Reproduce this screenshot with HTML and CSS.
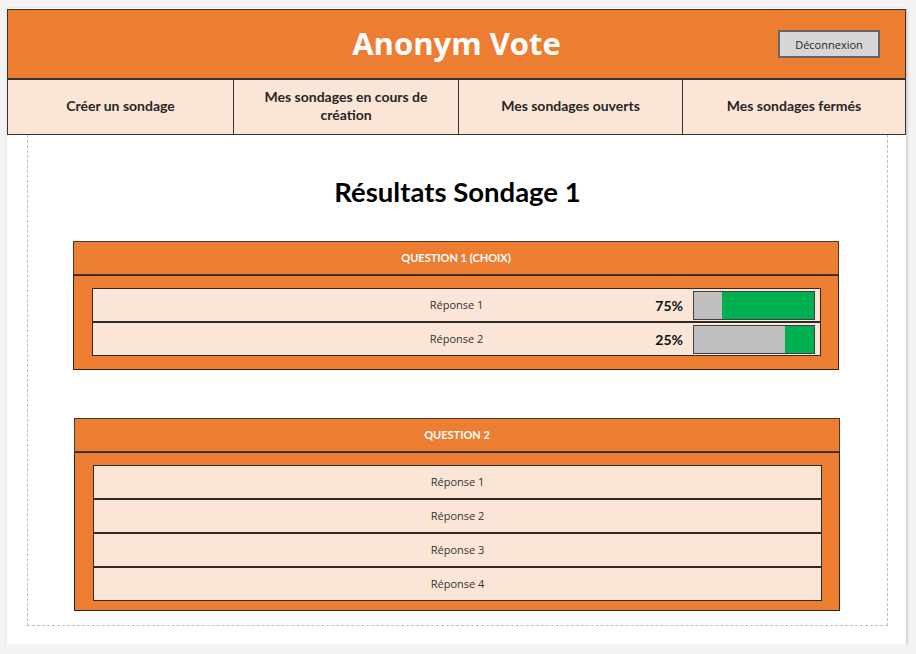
FILE: index.html
```html
<!DOCTYPE html>
<html lang="fr">
<head>
<meta charset="utf-8">
<title>Anonym Vote</title>
<link rel="stylesheet" href="styles.css">
</head>
<body>
<div class="page">
  <header class="header">
    <div class="header-spacer"></div>
    <h1 class="brand">Anonym Vote</h1>
    <div class="header-actions"><button class="logout">Déconnexion</button></div>
  </header>
  <nav class="nav">
    <div class="nav-item">Créer un sondage</div>
    <div class="nav-item">Mes sondages en cours de création</div>
    <div class="nav-item">Mes sondages ouverts</div>
    <div class="nav-item">Mes sondages fermés</div>
  </nav>
  <main class="content">
    <h2 class="title">Résultats Sondage 1</h2>

    <section class="question">
      <div class="q-head">QUESTION 1 (CHOIX)</div>
      <div class="q-body">
        <div class="answer">
          <span></span>
          <span class="answer-label">Réponse 1</span>
          <span class="score">
            <span class="pct">75%</span>
            <span class="bar"><span class="fill" style="width:77%"></span></span>
          </span>
        </div>
        <div class="answer">
          <span></span>
          <span class="answer-label">Réponse 2</span>
          <span class="score">
            <span class="pct">25%</span>
            <span class="bar"><span class="fill" style="width:24%"></span></span>
          </span>
        </div>
      </div>
    </section>

    <section class="question question-2">
      <div class="q-head">QUESTION 2</div>
      <div class="q-body q-body-2">
        <div class="answer"><span></span><span class="answer-label">Réponse 1</span><span></span></div>
        <div class="answer"><span></span><span class="answer-label">Réponse 2</span><span></span></div>
        <div class="answer"><span></span><span class="answer-label">Réponse 3</span><span></span></div>
        <div class="answer"><span></span><span class="answer-label">Réponse 4</span><span></span></div>
      </div>
    </section>
  </main>
</div>
</body>
</html>
```

FILE: styles.css
```css
* { box-sizing: border-box; }

html, body {
  margin: 0;
  background: #f3f3f3;
}

body {
  padding: 8px 0 0 7px;
  font-family: "Open Sans", "Liberation Sans", sans-serif;
}

.page {
  width: 899px;
  height: 636px;
  background: #ffffff;
  box-shadow: 1px 1px 3px rgba(0, 0, 0, 0.22);
  overflow: hidden;
}

.header {
  height: 70px;
  margin-top: 1px;
  background: #ed7d31;
  border: 1px solid #333333;
  display: grid;
  grid-template-columns: 1fr auto 1fr;
  align-items: center;
}

.brand {
  margin: 0;
  color: #ffffff;
  font-family: "Open Sans", sans-serif;
  font-weight: 700;
  font-size: 31px;
  line-height: 1;
  padding-bottom: 1px;
}

.header-actions {
  display: flex;
  justify-content: flex-end;
  padding-right: 25px;
}

.logout {
  width: 102px;
  height: 28px;
  background: #d6d6d6;
  border: 2px solid #666666;
  font-family: "Open Sans", sans-serif;
  font-size: 11px;
  color: #262626;
  padding: 0;
}

.nav {
  height: 56px;
  display: grid;
  grid-template-columns: 225px 225px 224px 1fr;
  background: #fbe5d6;
  border: 1px solid #333333;
}

.nav-item {
  display: flex;
  align-items: center;
  justify-content: center;
  text-align: center;
  padding: 0 22px 2px;
  font-family: Lato, "Open Sans", sans-serif;
  font-weight: 700;
  font-size: 14px;
  line-height: 18px;
  color: #262626;
  border-left: 1px solid #333333;
}

.nav-item:first-child { border-left: none; }

.content {
  margin-left: 20px;
  width: 861px;
  height: 491px;
  padding-top: 41px;
  border: 1px dashed #bdbdbd;
  border-top: none;
}

.title {
  margin: 0;
  text-align: center;
  font-family: Lato, "Open Sans", sans-serif;
  font-weight: 700;
  font-size: 27.5px;
  line-height: 32px;
  color: #000000;
}

.question {
  margin: 33px 0 0 45px;
  width: 766px;
}

.question-2 {
  margin-top: 48px;
  margin-left: 46px;
}

.q-head {
  height: 34px;
  display: flex;
  align-items: center;
  justify-content: center;
  padding-bottom: 1px;
  background: #ed7d31;
  border: 1px solid #4a3a2e;
  color: #ffffff;
  font-family: Lato, "Open Sans", sans-serif;
  font-weight: 700;
  font-size: 11px;
}

.q-body {
  background: #ed7d31;
  border: 1px solid #2e2620;
  padding: 12px 17px 13px 18px;
}

.q-body-2 {
  padding-bottom: 9px;
}

.answer {
  height: 34px;
  display: grid;
  grid-template-columns: 1fr auto 1fr;
  align-items: center;
  background: #fbe5d6;
  border: 1px solid #2e2a26;
}

.answer-label {
  font-family: "Open Sans", sans-serif;
  font-size: 11px;
  color: #333333;
  padding-bottom: 2px;
}

.score {
  display: flex;
  align-items: center;
  justify-content: flex-end;
  gap: 10px;
  padding-right: 5px;
}

.pct {
  font-family: Lato, "Open Sans", sans-serif;
  font-weight: 700;
  font-size: 14px;
  color: #111111;
}

.bar {
  width: 122px;
  height: 29px;
  display: flex;
  justify-content: flex-end;
  background: #bfbfbf;
  border: 1px solid #404040;
}

.fill {
  height: 100%;
  background: #00b050;
}
```
